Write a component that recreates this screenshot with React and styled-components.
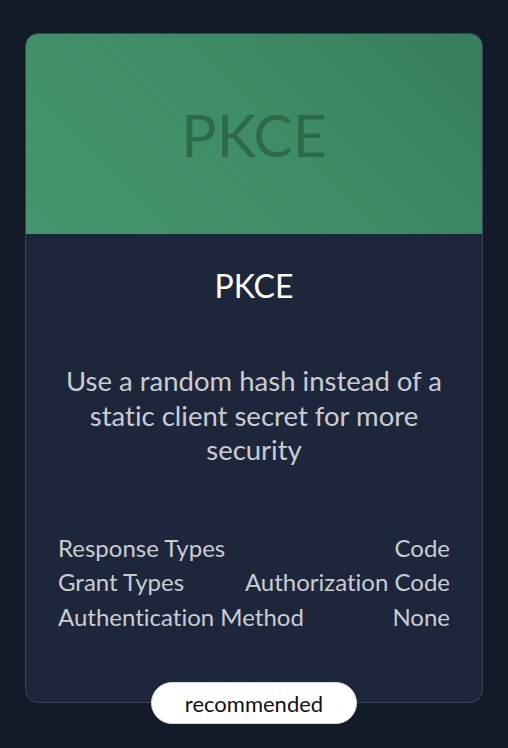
import React from "react"
import styled, { createGlobalStyle } from "styled-components"

const GlobalStyle = createGlobalStyle`
  html, body {
    margin: 0;
    padding: 0;
    background: #131a28;
  }
  body {
    font-family: Lato, "Noto Sans", sans-serif;
    font-variant-ligatures: no-common-ligatures;
  }
`

const Page = styled.div`
  width: 508px;
  height: 748px;
  padding: 33px 25px 0;
  box-sizing: border-box;
`

const Card = styled.div`
  position: relative;
  height: 670px;
  box-sizing: border-box;
  display: flex;
  flex-direction: column;
  background: #1e263b;
  border: 1px solid #3b4357;
  border-radius: 13px;
`

const Banner = styled.div`
  height: 200px;
  flex-shrink: 0;
  display: flex;
  align-items: center;
  justify-content: center;
  border-radius: 12px 12px 0 0;
  background: linear-gradient(225deg, #377d5c 0%, #3f8d66 50%, #44956d 100%);
`

const BannerText = styled.span`
  font-size: 59px;
  font-weight: 400;
  color: #2e6a4a;
`

const Body = styled.div`
  flex: 1;
  display: flex;
  flex-direction: column;
  align-items: center;
  padding: 0 32px;
`

const Title = styled.h2`
  margin: 32px 0 0;
  font-size: 32px;
  font-weight: 400;
  line-height: 40px;
  color: #ffffff;
`

const Description = styled.p`
  margin: 58px 0 0;
  font-size: 27.5px;
  line-height: 34.5px;
  text-align: center;
  color: #c9ccd3;
`

const Specs = styled.div`
  width: 100%;
  margin: 63px 0 0;
  display: flex;
  flex-direction: column;
  font-size: 24px;
  line-height: 34.5px;
  color: #c9ccd3;
`

const SpecRow = styled.div`
  display: flex;
  justify-content: space-between;
  white-space: nowrap;
`

const Badge = styled.span`
  position: absolute;
  left: 50%;
  bottom: -22px;
  transform: translateX(-50%);
  width: 206px;
  height: 42px;
  box-sizing: border-box;
  display: flex;
  align-items: center;
  justify-content: center;
  background: #ffffff;
  border: 1px solid #d4d6da;
  border-radius: 21px;
  font-size: 22px;
  color: #111111;
`

const specs = [
  ["Response Types", "Code"],
  ["Grant Types", "Authorization Code"],
  ["Authentication Method", "None"],
]

export default function App() {
  return (
    <>
      <GlobalStyle />
      <Page>
        <Card>
          <Banner>
            <BannerText>PKCE</BannerText>
          </Banner>
          <Body>
            <Title>PKCE</Title>
            <Description>
              Use a random hash instead of a static client secret for more security
            </Description>
            <Specs>
              {specs.map(([term, value]) => (
                <SpecRow key={term}>
                  <span>{term}</span>
                  <span>{value}</span>
                </SpecRow>
              ))}
            </Specs>
          </Body>
          <Badge>recommended</Badge>
        </Card>
      </Page>
    </>
  )
}
